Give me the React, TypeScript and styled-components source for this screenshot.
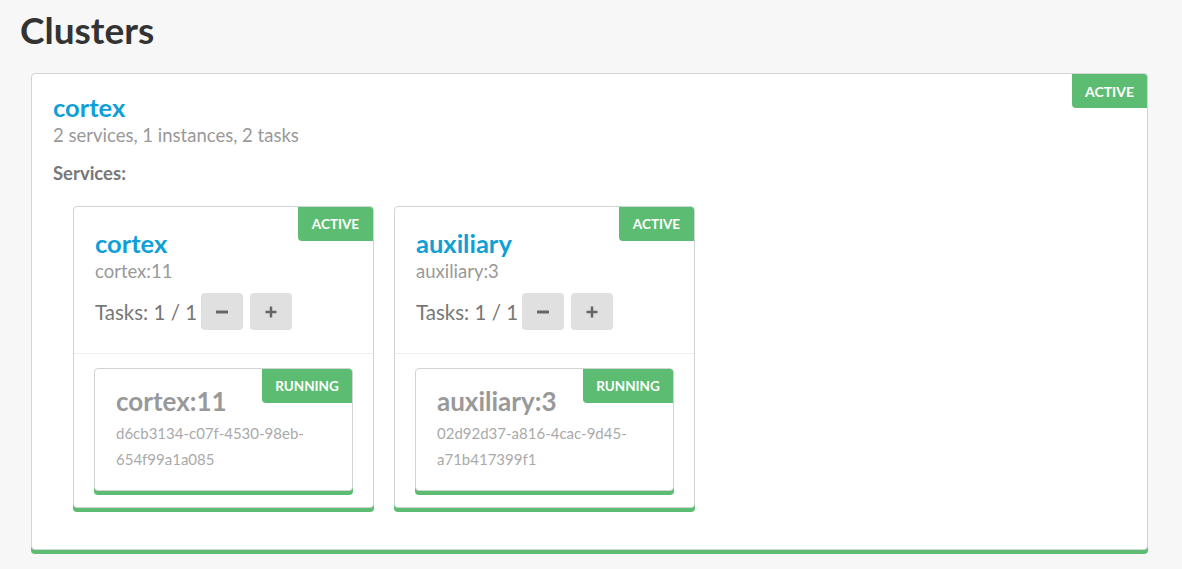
import React from "react";
import styled, { createGlobalStyle } from "styled-components";

const Global = createGlobalStyle`
  html, body { margin: 0; padding: 0; background: #f7f7f7; }
  body { font-family: Lato, "Open Sans", Arial, sans-serif; }
  * { box-sizing: border-box; }
`;

const GREEN = "#5cbd72";
const BLUE = "#0f9fd8";

const Page = styled.div`
  padding: 7px 34px 16px 20px;
`;

const Title = styled.h1`
  margin: 0 0 20px 0;
  font-size: 37px;
  line-height: 46px;
  font-weight: 700;
  color: #333;
`;

const Card = styled.div`
  position: relative;
  background: #fff;
  border: 1px solid #cfd6d1;
  border-radius: 4px;
  box-shadow: 0 4px 0 ${GREEN};
`;

const ClusterCard = styled(Card)`
  margin-left: 11px;
  min-height: 477px;
  padding: 18px 21px 24px 21px;
`;

const Badge = styled.div<{ $h: number; $w: number; $fs: number }>`
  position: absolute;
  top: 0;
  right: 0;
  width: ${(p) => p.$w}px;
  height: ${(p) => p.$h}px;
  background: ${GREEN};
  color: #fff;
  font-weight: 700;
  font-size: ${(p) => p.$fs}px;
  display: flex;
  align-items: center;
  justify-content: center;
  border-radius: 0 3px 0 4px;
`;

const Name = styled.a`
  display: block;
  color: ${BLUE};
  font-weight: 700;
  font-size: 25.5px;
  line-height: 30px;
  text-decoration: none;
`;

const Sub = styled.div`
  color: #999;
  font-size: 18.5px;
  line-height: 26px;
`;

const SectionLabel = styled.div`
  color: #777;
  font-weight: 700;
  font-size: 18.5px;
  line-height: 26px;
  margin-top: 12px;
`;

const ServiceList = styled.div`
  display: flex;
  gap: 20px;
  padding-left: 20px;
  margin-top: 20px;
`;

const ServiceCard = styled(Card)`
  width: 301px;
`;

const ServiceHead = styled.div`
  padding: 21px 21px 23px 21px;
  border-bottom: 1px solid #eee;
`;

const TasksRow = styled.div`
  display: flex;
  align-items: center;
  gap: 4px;
  margin-top: 9px;
  color: #777;
  font-size: 20.5px;
`;

const StepButton = styled.button`
  width: 42px;
  height: 37px;
  border: none;
  border-radius: 4px;
  background: #e0e0e0;
  color: #666;
  display: flex;
  align-items: center;
  justify-content: center;
  padding: 0;
  cursor: pointer;
  & + & { margin-left: 3px; }
`;

const TaskArea = styled.div`
  padding: 14px 20px 16px 20px;
`;

const TaskCard = styled(Card)`
  padding: 17px 21px 18px 21px;
  min-height: 123px;
`;

const TaskName = styled.div`
  color: #999;
  font-weight: 700;
  font-size: 26px;
  line-height: 30px;
`;

const TaskId = styled.div`
  color: #aaa;
  font-size: 15px;
  line-height: 26px;
  margin-top: 4px;
`;

const Minus = () => (
  <svg width="14" height="14" viewBox="0 0 14 14">
    <rect x="1" y="5.5" width="12" height="3" rx="0.5" fill="#666" />
  </svg>
);
const Plus = () => (
  <svg width="14" height="14" viewBox="0 0 14 14">
    <rect x="1.5" y="5.75" width="11" height="2.5" fill="#666" />
    <rect x="5.75" y="1.5" width="2.5" height="11" fill="#666" />
  </svg>
);

const services = [
  {
    name: "cortex",
    rev: "cortex:11",
    idLines: ["d6cb3134-c07f-4530-98eb-", "654f99a1a085"],
  },
  {
    name: "auxiliary",
    rev: "auxiliary:3",
    idLines: ["02d92d37-a816-4cac-9d45-", "a71b417399f1"],
  },
];

export default function App() {
  return (
    <>
      <Global />
      <Page>
        <Title>Clusters</Title>
        <ClusterCard>
          <Badge $w={75} $h={34} $fs={14}>ACTIVE</Badge>
          <Name href="#">cortex</Name>
          <Sub>2 services, 1 instances, 2 tasks</Sub>
          <SectionLabel>Services:</SectionLabel>
          <ServiceList>
            {services.map((s) => (
              <ServiceCard key={s.name}>
                <Badge $w={75} $h={34} $fs={13.5}>ACTIVE</Badge>
                <ServiceHead>
                  <Name href="#">{s.name}</Name>
                  <Sub>{s.rev}</Sub>
                  <TasksRow>
                    <span>Tasks: 1 / 1</span>
                    <StepButton aria-label="decrease"><Minus /></StepButton>
                    <StepButton aria-label="increase"><Plus /></StepButton>
                  </TasksRow>
                </ServiceHead>
                <TaskArea>
                  <TaskCard>
                    <Badge $w={90} $h={34} $fs={13.5}>RUNNING</Badge>
                    <TaskName>{s.rev}</TaskName>
                    <TaskId>
                      {s.idLines[0]}
                      <br />
                      {s.idLines[1]}
                    </TaskId>
                  </TaskCard>
                </TaskArea>
              </ServiceCard>
            ))}
          </ServiceList>
        </ClusterCard>
      </Page>
    </>
  );
}
